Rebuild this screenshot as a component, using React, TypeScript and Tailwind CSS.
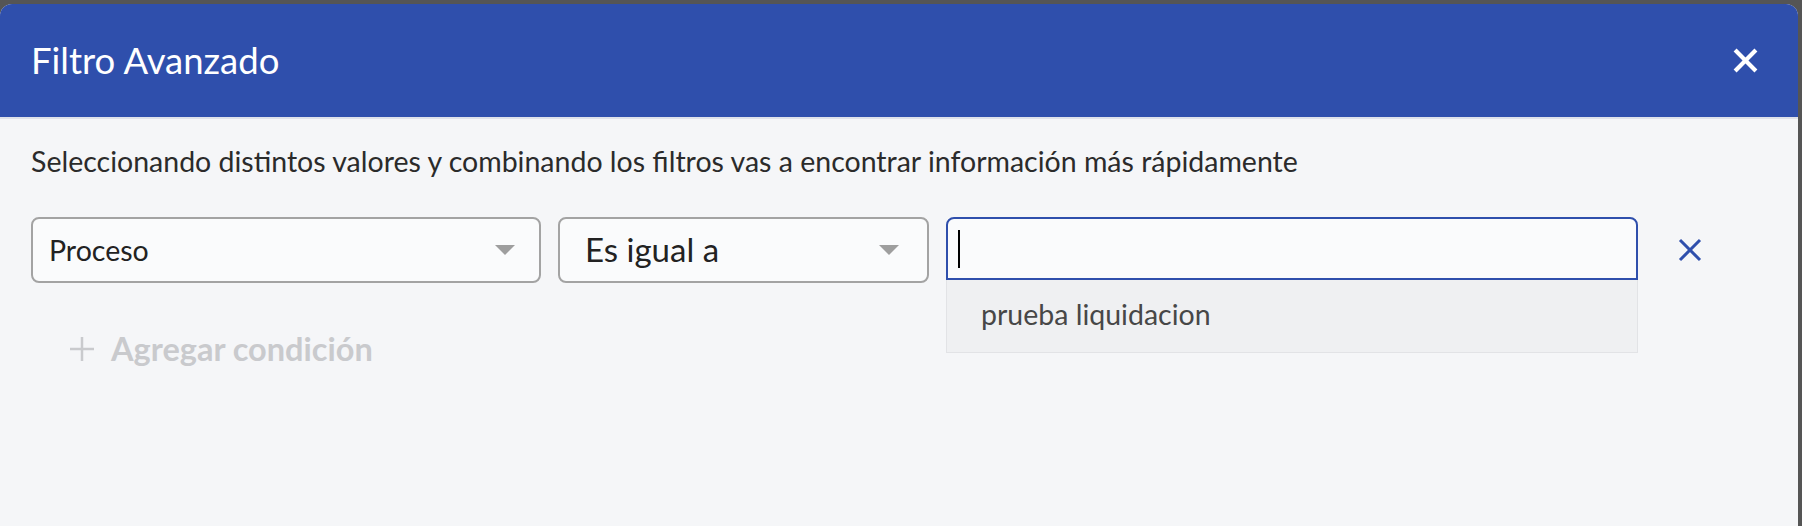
import React from "react";

function CloseIcon({ className, stroke }: { className?: string; stroke: number }) {
  return (
    <svg viewBox="0 0 24 24" className={className} fill="none">
      <path d="M2 2L22 22M22 2L2 22" stroke="currentColor" strokeWidth={stroke} />
    </svg>
  );
}

function Caret() {
  return (
    <svg viewBox="0 0 20 10" className="h-[10px] w-[20px] text-[#9e9e9e]">
      <path d="M0 0H20L10 10Z" fill="currentColor" />
    </svg>
  );
}

export default function App() {
  return (
    <div className="flex h-[526px] w-full bg-[#555] pt-[4px] pr-[4px] font-['Lato',sans-serif]">
      <div className="flex flex-1 flex-col overflow-hidden rounded-t-[12px] bg-[#f5f6f8]">
        <header className="box-content flex h-[113px] items-center justify-between border-b-2 border-[#dfe2ea] bg-[#2f4fac] pl-[31px] pr-[40px]">
          <h2 className="text-[36.5px] leading-none text-white">Filtro Avanzado</h2>
          <CloseIcon className="h-[25px] w-[25px] text-white" stroke={4} />
        </header>

        <div className="flex flex-col pl-[31px] pt-[24px]">
          <p className="text-[28.5px] leading-[36px] text-[#2b2b2b]">
            Seleccionando distintos valores y combinando los filtros vas a encontrar información más rápidamente
          </p>

          <div className="mt-[38px] flex items-start gap-[17px]">
            <div className="flex h-[66px] w-[510px] items-center justify-between rounded-[8px] border-2 border-[#a3a3a3] bg-[#fafbfc] pl-[16px] pr-[24px]">
              <span className="text-[28.5px] text-[#222]">Proceso</span>
              <Caret />
            </div>

            <div className="flex h-[66px] w-[371px] items-center justify-between rounded-[8px] border-2 border-[#a3a3a3] bg-[#fafbfc] pl-[25px] pr-[28px]">
              <span className="text-[33px] text-[#222]">Es igual a</span>
              <Caret />
            </div>

            <div className="relative w-[692px]">
              <div className="flex h-[63px] items-center rounded-t-[8px] border-2 border-[#2f4fac] bg-[#fafbfc] pl-[10px]">
                <span className="h-[38px] w-[2px] bg-black" />
              </div>
              <div className="absolute left-0 right-0 top-[63px] flex h-[73px] items-center border border-t-0 border-[#e2e3e6] bg-[#eff0f2] pb-[4px] pl-[34px]">
                <span className="text-[28.5px] text-[#474747]">prueba liquidacion</span>
              </div>
            </div>

            <div className="flex h-[66px] items-center pl-[23px]">
              <CloseIcon className="h-[24px] w-[24px] text-[#2f4fac]" stroke={3} />
            </div>
          </div>

          <div className="mt-[42px] flex items-center gap-[17px] pl-[39px] text-[#c9cacd]">
            <svg viewBox="0 0 24 24" className="h-[24px] w-[24px]" fill="none">
              <path d="M12 0V24M0 12H24" stroke="currentColor" strokeWidth={2.5} />
            </svg>
            <span className="text-[32.5px] font-bold">Agregar condición</span>
          </div>
        </div>
      </div>
    </div>
  );
}
